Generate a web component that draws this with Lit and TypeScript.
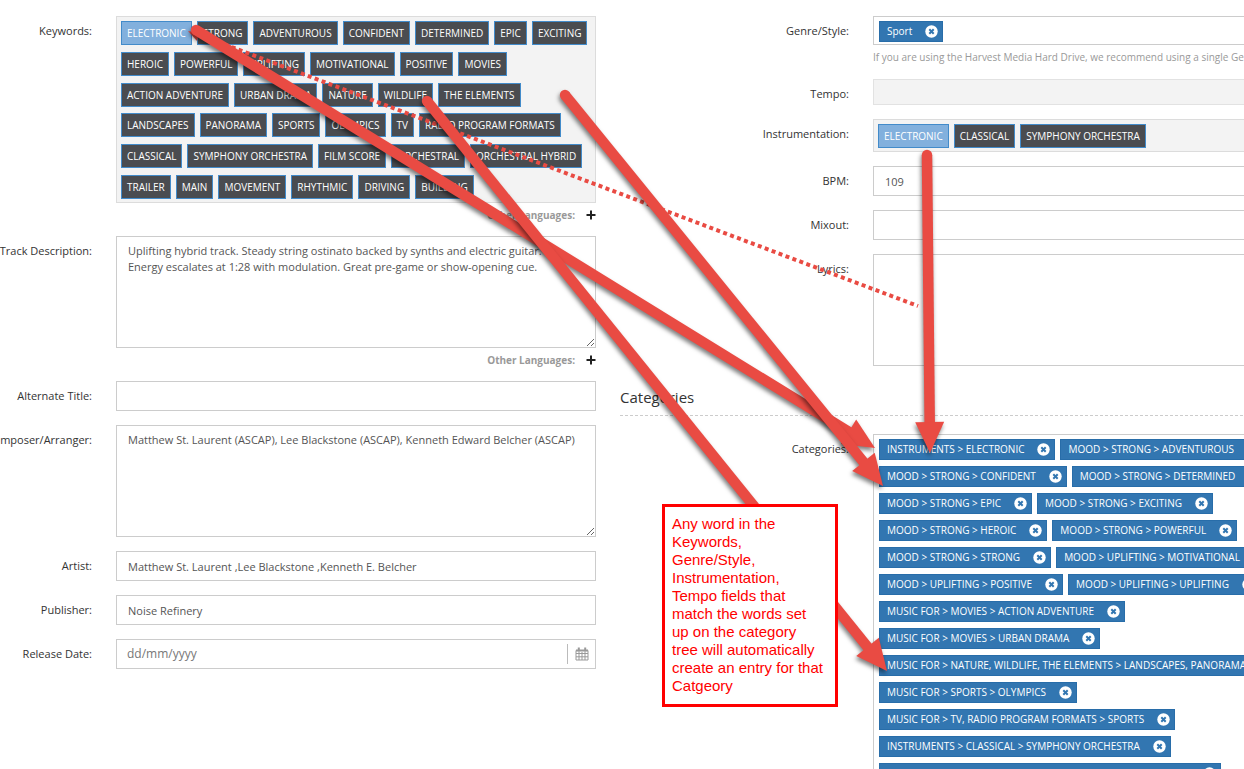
import { LitElement, html, css, svg } from "lit";
import { customElement, property } from "lit/decorators.js";

const KEYWORDS = [
  "ELECTRONIC", "STRONG", "ADVENTUROUS", "CONFIDENT", "DETERMINED", "EPIC", "EXCITING",
  "HEROIC", "POWERFUL", "UPLIFTING", "MOTIVATIONAL", "POSITIVE", "MOVIES",
  "ACTION ADVENTURE", "URBAN DRAMA", "NATURE", "WILDLIFE", "THE ELEMENTS",
  "LANDSCAPES", "PANORAMA", "SPORTS", "OLYMPICS", "TV", "RADIO PROGRAM FORMATS",
  "CLASSICAL", "SYMPHONY ORCHESTRA", "FILM SCORE", "ORCHESTRAL", "ORCHESTRAL HYBRID",
  "TRAILER", "MAIN", "MOVEMENT", "RHYTHMIC", "DRIVING", "BUILDING",
];

const INSTRUMENTS = ["ELECTRONIC", "CLASSICAL", "SYMPHONY ORCHESTRA"];

const CATEGORIES = [
  "INSTRUMENTS > ELECTRONIC",
  "MOOD > STRONG > ADVENTUROUS",
  "MOOD > STRONG > CONFIDENT",
  "MOOD > STRONG > DETERMINED",
  "MOOD > STRONG > EPIC",
  "MOOD > STRONG > EXCITING",
  "MOOD > STRONG > HEROIC",
  "MOOD > STRONG > POWERFUL",
  "MOOD > STRONG > STRONG",
  "MOOD > UPLIFTING > MOTIVATIONAL",
  "MOOD > UPLIFTING > POSITIVE",
  "MOOD > UPLIFTING > UPLIFTING",
  "MUSIC FOR > MOVIES > ACTION ADVENTURE",
  "MUSIC FOR > MOVIES > URBAN DRAMA",
  "MUSIC FOR > NATURE, WILDLIFE, THE ELEMENTS > LANDSCAPES, PANORAMA",
  "MUSIC FOR > SPORTS > OLYMPICS",
  "MUSIC FOR > TV, RADIO PROGRAM FORMATS > SPORTS",
  "INSTRUMENTS > CLASSICAL > SYMPHONY ORCHESTRA",
  "MUSIC FOR > FILM SCORES, ORCHESTRAL > ORCHESTRAL HYBRID",
];

/** Keyword chips; the first one is shown selected. */
@customElement("keyword-list")
export class KeywordList extends LitElement {
  @property({ attribute: false }) words: string[] = [];

  static styles = css`
    :host {
      display: flex;
      flex-wrap: wrap;
      align-content: space-between;
      gap: 6px 5px;
      box-sizing: border-box;
      padding: 4px 4px 3px;
      border: 1px solid #dcdcdc;
      background: #f3f3f3;
    }
    .word {
      box-sizing: border-box;
      height: 24px;
      padding: 0 5px;
      border: 1px solid #428bca;
      border-radius: 0;
      background: #4a4c50;
      color: #fff;
      font: 10px/22px "Open Sans", sans-serif;
      white-space: nowrap;
    }
    .selected {
      background: #82b0dd;
    }
  `;

  render() {
    return this.words.map(
      (w, i) => html`<button type="button" class="word ${i === 0 ? "selected" : ""}">${w}</button>`
    );
  }
}

/** Removable blue tags. */
@customElement("tag-list")
export class TagList extends LitElement {
  @property({ attribute: false }) tags: string[] = [];

  static styles = css`
    :host {
      display: flex;
      flex-wrap: wrap;
      align-content: flex-start;
      gap: 6px 5px;
      box-sizing: border-box;
      padding: 4px 5px 2px;
      border: 1px solid #ccc;
      background: #fff;
    }
    .tag {
      display: flex;
      align-items: center;
      gap: 13px;
      box-sizing: border-box;
      height: 21px;
      padding: 0 4px 0 7px;
      border: 1px solid #286da9;
      background: #3276b1;
      color: #fff;
      font: 10px/19px "Open Sans", sans-serif;
      white-space: nowrap;
    }
    .remove {
      display: block;
      width: 13px;
      height: 13px;
      padding: 0;
      border: 0;
      background: none;
    }
    .remove svg {
      display: block;
    }
  `;

  render() {
    return this.tags.map(
      (t) => html`<span class="tag">
        ${t}
        <button type="button" class="remove" aria-label="Remove ${t}">
          <svg width="13" height="13" viewBox="0 0 13 13">
            <circle cx="6.5" cy="6.5" r="6.2" fill="#fff" />
            <path d="M4.3 4.3l4.4 4.4m0-4.4l-4.4 4.4" stroke="#3276b1" stroke-width="2" />
          </svg>
        </button>
      </span>`
    );
  }
}

interface Arrow {
  from: [number, number];
  to: [number, number];
}

const ARROWS: Arrow[] = [
  { from: [196, 30], to: [875, 448] },
  { from: [565, 95], to: [883, 486] },
  { from: [427, 101], to: [887, 671] },
  { from: [927, 155], to: [930, 453] },
];

/** Red annotation arrows drawn over the form. */
@customElement("arrow-layer")
export class ArrowLayer extends LitElement {
  static styles = css`
    :host {
      display: block;
      pointer-events: none;
    }
    .canvas {
      display: block;
      width: 100%;
      height: 100%;
      overflow: visible;
    }
    .arrow {
      filter: drop-shadow(-1px 3px 2px rgba(0, 0, 0, 0.5));
    }
  `;

  private arrow({ from, to }: Arrow) {
    const dx = to[0] - from[0];
    const dy = to[1] - from[1];
    const len = Math.hypot(dx, dy);
    const ux = dx / len;
    const uy = dy / len;
    const bx = to[0] - ux * 31;
    const by = to[1] - uy * 31;
    const wing = 14.5;
    const head = [
      to,
      [bx - uy * wing, by + ux * wing],
      [bx + uy * wing, by - ux * wing],
    ].map((p) => p.join(",")).join(" ");
    return svg`<g class="arrow" fill="#e94b43" stroke="none">
      <path d="M${from[0]} ${from[1]}L${bx + ux * 2} ${by + uy * 2}" stroke="#e94b43" stroke-width="10.5" />
      <circle cx=${from[0]} cy=${from[1]} r="5.2" />
      <polygon points=${head} />
    </g>`;
  }

  render() {
    return html`<svg class="canvas" aria-hidden="true">
      <path d="M197 34L918 306" stroke="#e94b43" stroke-width="4" stroke-dasharray="4 3.4" />
      <path d="M188 31L197 41L199 33Z" fill="#e94b43" />
      ${ARROWS.map((a) => this.arrow(a))}
    </svg>`;
  }
}

@customElement("app-root")
export class AppRoot extends LitElement {
  static styles = css`
    :host {
      display: block;
      position: relative;
      box-sizing: border-box;
      height: 100vh;
      overflow: hidden;
      background: #fff;
      color: #333;
      font: 11px/16px "Open Sans", sans-serif;
    }
    .form {
      display: grid;
      grid-template-columns: minmax(596px, 1fr) minmax(733px, 1fr);
      column-gap: 24px;
      padding-top: 16px;
    }
    .column {
      display: flex;
      flex-direction: column;
      gap: 14px;
      min-width: 0;
    }
    .row {
      display: grid;
      grid-template-columns: 92px minmax(0, 1fr);
      column-gap: 24px;
    }
    .right .row {
      grid-template-columns: 229px minmax(0, 1fr);
    }
    .label {
      display: flex;
      justify-content: flex-end;
      line-height: 30px;
      height: 26px;
      white-space: nowrap;
    }
    .box {
      display: block;
      box-sizing: border-box;
      width: 100%;
      margin: 0;
      border: 1px solid #ccc;
      border-radius: 0;
      background: #fff;
      color: #555;
      font: 11px/16px "Open Sans", sans-serif;
      outline: none;
    }
    input.box {
      height: 30px;
      padding: 0 11px;
    }
    textarea.box {
      height: 112px;
      padding: 6px 11px;
      resize: vertical;
    }
    input.muted {
      height: 26px;
      border-color: #e2e2e2;
      background: #f3f3f3;
    }
    .keywords {
      min-height: 187px;
    }
    .languages {
      display: flex;
      align-items: center;
      justify-content: flex-end;
      gap: 11px;
      height: 20px;
      padding: 2px 0 11px;
      margin-bottom: -14px;
      color: #999;
      font-weight: bold;
      font-size: 10px;
    }
    .add {
      display: block;
      width: 10px;
      height: 10px;
      padding: 0;
      border: 0;
      background: none;
    }
    .add svg,
    .pick svg {
      display: block;
    }
    .help {
      margin: 0;
      padding: 4px 0 0;
      color: #999;
      font-size: 10px;
      white-space: nowrap;
    }
    .date {
      display: flex;
      align-items: center;
      padding-right: 6px;
      height: 30px;
    }
    .date-input {
      flex: 1;
      min-width: 0;
      border: 0;
      padding: 0 10px;
      background: none;
      font: 12px/18px "Open Sans", sans-serif;
      outline: none;
    }
    .date-input::placeholder {
      color: #777;
    }
    .pick {
      padding: 3px 0 3px 7px;
      border: 0;
      border-left: 1px solid #bbb;
      background: none;
    }
    .heading {
      margin: 5px 0 4px;
      padding-bottom: 6px;
      border-bottom: 1px dashed #ccc;
      font-size: 15px;
      line-height: 24px;
      font-weight: normal;
    }
    .arrows {
      position: absolute;
      inset: 0;
    }
    .note {
      position: absolute;
      left: 662px;
      top: 504px;
      box-sizing: border-box;
      width: 176px;
      margin: 0;
      padding: 8px 10px 9px 7px;
      border: 3px solid #f00;
      background: #fff;
      color: #f00;
      font: 15px/18px "Liberation Sans", Arial, sans-serif;
    }
  `;

  private languages() {
    return html`<div class="languages">
      <span>Other Languages:</span>
      <button type="button" class="add" aria-label="Add language">
        <svg width="10" height="10" viewBox="0 0 10 10">
          <path d="M5 0.5v9M0.5 5h9" stroke="#222" stroke-width="2" />
        </svg>
      </button>
    </div>`;
  }

  render() {
    return html`
      <form class="form" @submit=${(e: Event) => e.preventDefault()}>
        <div class="column left">
          <div class="row">
            <span class="label">Keywords:</span>
            <div>
              <keyword-list class="keywords" .words=${KEYWORDS}></keyword-list>
              ${this.languages()}
            </div>
          </div>
          <div class="row">
            <label class="label" for="description">Track Description:</label>
            <div>
              <textarea class="box" id="description" spellcheck="false" .value=${"Uplifting hybrid track. Steady string ostinato backed by synths and electric guitar.\nEnergy escalates at 1:28 with modulation. Great pre-game or show-opening cue."}></textarea>
              ${this.languages()}
            </div>
          </div>
          <div class="row">
            <label class="label" for="alternate">Alternate Title:</label>
            <input class="box" id="alternate" type="text" />
          </div>
          <div class="row">
            <label class="label" for="composer">Composer/Arranger:</label>
            <textarea class="box" id="composer" spellcheck="false" .value=${"Matthew St. Laurent (ASCAP), Lee Blackstone (ASCAP), Kenneth Edward Belcher (ASCAP)"}></textarea>
          </div>
          <div class="row">
            <label class="label" for="artist">Artist:</label>
            <input class="box" id="artist" type="text" value="Matthew St. Laurent ,Lee Blackstone ,Kenneth E. Belcher" />
          </div>
          <div class="row">
            <label class="label" for="publisher">Publisher:</label>
            <input class="box" id="publisher" type="text" value="Noise Refinery" />
          </div>
          <div class="row">
            <label class="label" for="release">Release Date:</label>
            <div class="box date">
              <input class="date-input" id="release" type="text" placeholder="dd/mm/yyyy" />
              <button type="button" class="pick" aria-label="Pick a date">
                <svg width="14" height="14" viewBox="0 0 14 14" fill="none" stroke="#999">
                  <path d="M1 3.5h12v9.5h-12zM1 6.5h12M1 9.8h12M4 5v8M7 5v8M10 5v8" />
                  <path d="M1 3.5h12" stroke-width="2" />
                  <path d="M3.8 0.5v4M10.2 0.5v4" stroke-width="2" stroke="#999" />
                </svg>
              </button>
            </div>
          </div>
        </div>

        <div class="column right">
          <div class="row">
            <span class="label">Genre/Style:</span>
            <div>
              <tag-list .tags=${["Sport"]}></tag-list>
              <p class="help">If you are using the Harvest Media Hard Drive, we recommend using a single Genre/Style</p>
            </div>
          </div>
          <div class="row">
            <label class="label" for="tempo">Tempo:</label>
            <input class="box muted" id="tempo" type="text" />
          </div>
          <div class="row">
            <span class="label">Instrumentation:</span>
            <keyword-list .words=${INSTRUMENTS}></keyword-list>
          </div>
          <div class="row">
            <label class="label" for="bpm">BPM:</label>
            <input class="box" id="bpm" type="text" value="109" />
          </div>
          <div class="row">
            <label class="label" for="mixout">Mixout:</label>
            <input class="box" id="mixout" type="text" />
          </div>
          <div class="row">
            <label class="label" for="lyrics">Lyrics:</label>
            <textarea class="box" id="lyrics"></textarea>
          </div>
          <h2 class="heading">Categories</h2>
          <div class="row">
            <span class="label">Categories:</span>
            <tag-list .tags=${CATEGORIES}></tag-list>
          </div>
        </div>
      </form>
      <arrow-layer class="arrows"></arrow-layer>
      <p class="note">Any word in the Keywords, Genre/Style, Instrumentation, Tempo fields that match the words set up on the category tree will automatically create an entry for that Catgeory</p>
    `;
  }
}
